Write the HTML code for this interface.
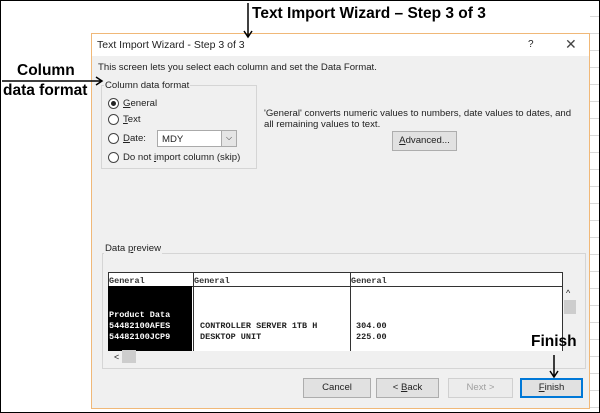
<!DOCTYPE html>
<html><head><style>
*{margin:0;padding:0;box-sizing:border-box}
body{width:600px;height:413px;position:relative;overflow:hidden;background:#fff;font-family:"Liberation Sans",sans-serif;font-size:9.6px;color:#222}
.a{position:absolute;white-space:nowrap}
.outer{left:0;top:0;width:600px;height:413px;border:1px solid #000;z-index:20;pointer-events:none}
.grid{left:590px;top:0;width:10px;height:413px;background:repeating-linear-gradient(#fff 0 16px,#d8d8d8 16px 17px)}
.dlg{left:91px;top:33px;width:499px;height:376px;border:1px solid #f0b878;background:#f0f0f0}
.title{left:0;top:0;width:497px;height:22px;background:#fff}
.u{text-decoration:underline}
.radio{width:11px;height:11px;border:1px solid #444;border-radius:50%;background:#fff}
.radio.on::after{content:"";position:absolute;left:2px;top:2px;width:5px;height:5px;border-radius:50%;background:#222}
.btn{height:20px;border:1px solid #adadad;background:#e1e1e1;text-align:center;line-height:18px;font-size:9.6px}
.mono{font-family:"Liberation Mono",monospace;font-size:8.5px;font-weight:bold;line-height:11px;white-space:pre}
.ann{font-weight:bold;font-size:15.5px;color:#000}
</style></head><body>
<div class="a grid"></div>
<div class="a dlg">
 <div class="a title"></div>
 <div class="a" style="left:5px;top:5px;font-size:10.5px">Text Import Wizard - Step 3 of 3</div>
 <div class="a" style="left:436px;top:5px;font-size:10px">?</div>
 <div class="a" style="left:473px;top:2px;font-size:14px;color:#444">✕</div>
 <div class="a" style="left:6px;top:28px">This screen lets you select each column and set the Data Format.</div>
 <div class="a" style="left:9px;top:51px;width:156px;height:84px;border:1px solid #d5d5d5"></div>
 <div class="a" style="left:12px;top:46px;background:#f0f0f0;padding:0 1px">Column data format</div>
 <div class="a radio on" style="left:16px;top:64px"></div><div class="a" style="left:31px;top:64px"><span class="u">G</span>eneral</div>
 <div class="a radio" style="left:16px;top:80px"></div><div class="a" style="left:31px;top:80px"><span class="u">T</span>ext</div>
 <div class="a radio" style="left:16px;top:99px"></div><div class="a" style="left:31px;top:99px"><span class="u">D</span>ate:</div>
 <div class="a" style="left:65px;top:96px;width:80px;height:17px;border:1px solid #aaa;background:#fff"><span class="a" style="left:4px;top:3px">MDY</span><span class="a" style="right:0;top:0;width:15px;height:15px;background:#e5e5e5;border-left:1px solid #aaa;text-align:center;line-height:14px;font-size:8px">⌵</span></div>
 <div class="a radio" style="left:16px;top:118px"></div><div class="a" style="left:31px;top:118px">Do not <span class="u">i</span>mport column (skip)</div>
 <div class="a" style="left:172px;top:74px;line-height:11px">'General' converts numeric values to numbers, date values to dates, and<br>all remaining values to text.</div>
 <div class="a btn" style="left:300px;top:97px;width:65px"><span class="u">A</span>dvanced...</div>
 <div class="a" style="left:10px;top:219px;width:484px;height:116px;border:1px solid #d5d5d5"></div>
 <div class="a" style="left:12px;top:209px;background:#f0f0f0;padding:0 1px">Data <span class="u">p</span>review</div>
 <div class="a" style="left:16px;top:238px;width:455px;height:79px;background:#fff;border-left:1px solid #333;border-top:1px solid #333;border-right:1px solid #333"></div>
 <div class="a" style="left:16px;top:252px;width:455px;height:1px;background:#333"></div>
 <div class="a" style="left:16px;top:252px;width:84px;height:65px;background:#000"></div>
 <div class="a" style="left:101px;top:238px;width:1px;height:79px;background:#333"></div>
 <div class="a" style="left:258px;top:238px;width:1px;height:79px;background:#333"></div>
 <div class="a mono" style="left:17px;top:242px;color:#333">General</div>
 <div class="a mono" style="left:102px;top:242px;color:#333">General</div>
 <div class="a mono" style="left:259px;top:242px;color:#333">General</div>
 <div class="a mono" style="left:17px;top:276px;color:#fff">Product Data
54482100AFES
54482100JCP9</div>
 <div class="a mono" style="left:108px;top:287px">CONTROLLER SERVER 1TB H
DESKTOP UNIT</div>
 <div class="a mono" style="left:264px;top:287px">304.00
225.00</div>
 <div class="a" style="left:474px;top:254px;font-size:9px">^</div>
 <div class="a" style="left:472px;top:266px;width:12px;height:14px;background:#cdcdcd"></div>
 <div class="a" style="left:22px;top:318px;font-size:9px">&lt;</div>
 <div class="a" style="left:30px;top:316px;width:14px;height:13px;background:#cdcdcd"></div>
 <div class="a btn" style="left:211px;top:344px;width:68px">Cancel</div>
 <div class="a btn" style="left:284px;top:344px;width:63px">&lt; <span class="u">B</span>ack</div>
 <div class="a btn" style="left:356px;top:344px;width:65px;color:#a0a0a0;background:#ececec;border-color:#d0d0d0">Next &gt;</div>
 <div class="a btn" style="left:428px;top:344px;width:63px;border:2px solid #0078d7;line-height:16px"><span class="u">F</span>inish</div>
</div>
<div class="a ann" style="left:252px;top:5px">Text Import Wizard – Step 3 of 3</div>
<svg class="a" style="left:0;top:0" width="600" height="413">
 <g stroke="#000" stroke-width="1.5" fill="none">
  <path d="M248 3V37M244 31L248 37L252 31"/>
  <path d="M2 81H102M96 77L102 81L96 85"/>
  <path d="M554 355V377M550 371L554 377L558 371"/>
 </g>
</svg>
<div class="a ann" style="left:17px;top:62px">Column</div>
<div class="a ann" style="left:3px;top:82px">data format</div>
<div class="a ann" style="left:531px;top:333px">Finish</div>
<div class="a outer"></div>
</body></html>
